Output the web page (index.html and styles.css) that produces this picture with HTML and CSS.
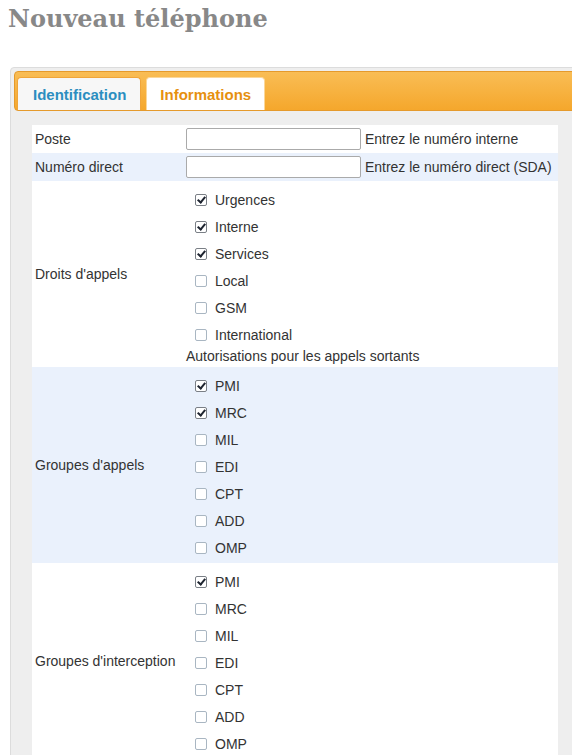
FILE: index.html
```html
<!DOCTYPE html>
<html lang="fr">
<head>
<meta charset="utf-8">
<title>Nouveau téléphone</title>
<link rel="stylesheet" href="styles.css">
</head>
<body>
<h1 class="title">Nouveau téléphone</h1>
<div class="box">
  <div class="tabbar">
    <a class="tab">Identification</a>
    <a class="tab active">Informations</a>
  </div>
  <div class="panel">
    <table class="form">
      <colgroup><col class="c1"><col class="c2"></colgroup>
      <tr class="odd">
        <td class="lbl">Poste</td>
        <td class="val"><input type="text" class="field"> <span class="hint">Entrez le numéro interne</span></td>
      </tr>
      <tr class="even">
        <td class="lbl">Numéro direct</td>
        <td class="val"><input type="text" class="field"> <span class="hint">Entrez le numéro direct (SDA)</span></td>
      </tr>
      <tr class="odd">
        <td class="lbl">Droits d'appels</td>
        <td class="val list">
          <label class="opt"><input type="checkbox" class="cb" checked>Urgences</label>
          <label class="opt"><input type="checkbox" class="cb" checked>Interne</label>
          <label class="opt"><input type="checkbox" class="cb" checked>Services</label>
          <label class="opt"><input type="checkbox" class="cb">Local</label>
          <label class="opt"><input type="checkbox" class="cb">GSM</label>
          <label class="opt"><input type="checkbox" class="cb">International</label>
          <div class="note">Autorisations pour les appels sortants</div>
        </td>
      </tr>
      <tr class="even">
        <td class="lbl">Groupes d'appels</td>
        <td class="val list">
          <label class="opt"><input type="checkbox" class="cb" checked>PMI</label>
          <label class="opt"><input type="checkbox" class="cb" checked>MRC</label>
          <label class="opt"><input type="checkbox" class="cb">MIL</label>
          <label class="opt"><input type="checkbox" class="cb">EDI</label>
          <label class="opt"><input type="checkbox" class="cb">CPT</label>
          <label class="opt"><input type="checkbox" class="cb">ADD</label>
          <label class="opt"><input type="checkbox" class="cb">OMP</label>
        </td>
      </tr>
      <tr class="odd">
        <td class="lbl">Groupes d'interception</td>
        <td class="val list">
          <label class="opt"><input type="checkbox" class="cb" checked>PMI</label>
          <label class="opt"><input type="checkbox" class="cb">MRC</label>
          <label class="opt"><input type="checkbox" class="cb">MIL</label>
          <label class="opt"><input type="checkbox" class="cb">EDI</label>
          <label class="opt"><input type="checkbox" class="cb">CPT</label>
          <label class="opt"><input type="checkbox" class="cb">ADD</label>
          <label class="opt"><input type="checkbox" class="cb">OMP</label>
        </td>
      </tr>
    </table>
  </div>
</div>
</body>
</html>
```
FILE: styles.css
```css
html, body {
  overflow: hidden;
}
body {
  margin: 8px;
  background: #fff;
  font-family: "Liberation Sans", Arial, sans-serif;
  font-size: 14px;
  color: #333;
}
.title {
  margin: 0;
  font-family: "DejaVu Serif", serif;
  font-weight: bold;
  font-size: 24px;
  line-height: 22px;
  color: #888;
  height: 59px;
}
.box {
  margin-left: 2px;
  margin-right: -40px;
  border: 1px solid #dcdcdc;
  border-radius: 4px;
  background: #eeeeee;
  padding: 3px;
  min-height: 700px;
}
.tabbar {
  display: flex;
  gap: 5px;
  padding: 5px 3px 0 2px;
  height: 33px;
  border: 1px solid #e59a2c;
  border-radius: 4px;
  background: linear-gradient(#f9bd55, #f5a72c);
}
.tab {
  display: flex;
  align-items: center;
  padding: 0 14px 0 15px;
  border: 1px solid #f0a53a;
  border-bottom: none;
  border-radius: 4px 4px 0 0;
  background: #f7f7f7;
  font-weight: bold;
  font-size: 15px;
  color: #2b8ec0;
  cursor: pointer;
}
.tab.active {
  background: #fff;
  border-color: #fbd79a;
  color: #e6900f;
  padding: 0 13px 0 13px;
}
.panel {
  padding: 14px 0 0 18px;
}
.form {
  width: 526px;
  table-layout: fixed;
  border-collapse: collapse;
}
.c1 {
  width: 154px;
}
.form td {
  padding: 0;
}
.odd {
  background: #fff;
}
.even {
  background: #eaf1fc;
}
.lbl {
  padding-left: 3px !important;
  vertical-align: middle;
}
.val {
  height: 28px;
  white-space: nowrap;
}
.field {
  box-sizing: border-box;
  width: 175px;
  height: 22px;
  margin: 0;
  border: 1px solid #aaa;
  border-radius: 2px;
  background: #fff;
  vertical-align: middle;
  font: inherit;
}
.hint {
  vertical-align: middle;
}
.list {
  padding: 5px 0 2px 0 !important;
}
.opt {
  display: flex;
  align-items: center;
  height: 27px;
  padding-left: 9px;
}
.cb {
  appearance: none;
  -webkit-appearance: none;
  position: relative;
  box-sizing: border-box;
  width: 12px;
  height: 12px;
  margin: 0 8px 0 0;
  border: 1px solid #a9b6c2;
  border-radius: 2px;
  background: #fff;
}
.cb:checked {
  border-color: #7a7f86;
}
.cb:checked::after {
  content: "";
  position: absolute;
  left: 3px;
  top: 0px;
  width: 3px;
  height: 6px;
  border: solid #1e2430;
  border-width: 0 2px 2px 0;
  transform: rotate(40deg);
}
.note {
  line-height: 16px;
  padding-bottom: 1px;
}
```
